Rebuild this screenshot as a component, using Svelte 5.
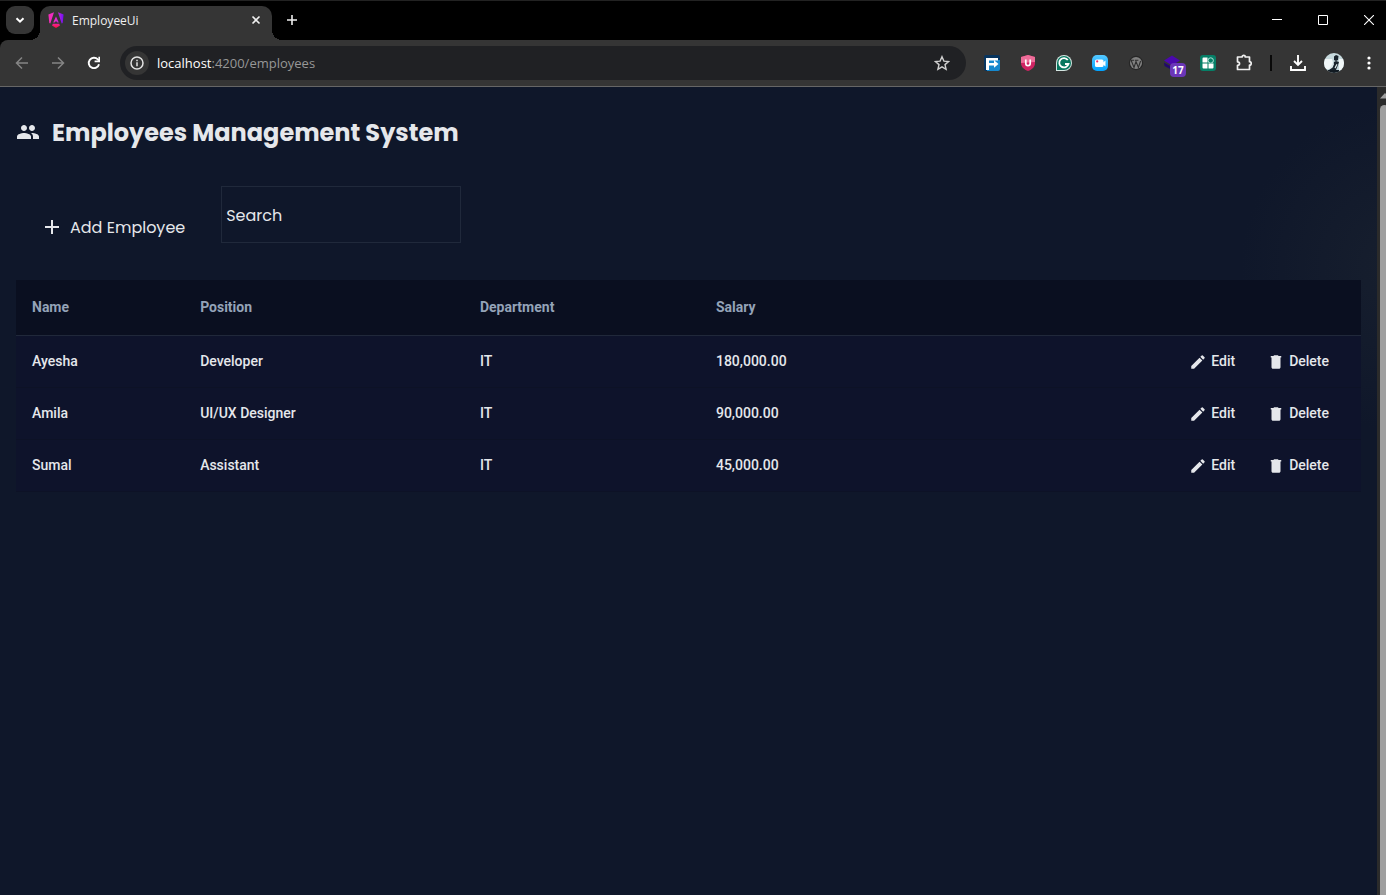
<script>
  const employees = [
    { name: 'Ayesha', position: 'Developer', department: 'IT', salary: '180,000.00' },
    { name: 'Amila', position: 'UI/UX Designer', department: 'IT', salary: '90,000.00' },
    { name: 'Sumal', position: 'Assistant', department: 'IT', salary: '45,000.00' },
  ];
  let search = $state('');
</script>

<div class="window">
  <header class="tabstrip">
    <button class="tab-search" aria-label="Search tabs">
      <svg width="10" height="10" viewBox="0 0 10 10"><path d="M1.5 3.2 5 6.7 8.5 3.2" fill="none" stroke="#fff" stroke-width="2" /></svg>
    </button>
    <div class="tab">
      <svg width="16" height="16" viewBox="0 0 16 16" aria-hidden="true">
        <defs>
          <linearGradient id="ng" x1="0" y1="0" x2="1" y2="0">
            <stop offset="0" stop-color="#f62cb4" />
            <stop offset="0.5" stop-color="#e62ad0" />
            <stop offset="1" stop-color="#6b10f5" />
          </linearGradient>
          <linearGradient id="ngb" x1="0" y1="0" x2="0" y2="1">
            <stop offset="0" stop-color="#f0219f" />
            <stop offset="1" stop-color="#ff1238" />
          </linearGradient>
        </defs>
        <path fill="url(#ng)" d="M6 .2.4 2.6l.9 8.3 1 .6L6 .2Zm4 0 5.600 2.400-.9 8.300-1 .6L10 .2ZM8 4.600l-2.800 6h1.500l.5-1.200h1.600l.5 1.200h1.500Z" />
        <path fill="url(#ngb)" d="M4.900 11.800h6.200l.9 1.700L8 15.900 4 13.500Z" />
      </svg>
      <span class="tab-title">EmployeeUi</span>
      <button class="tab-close" aria-label="Close tab">
        <svg width="10" height="10" viewBox="0 0 10 10"><path d="m1.500 1.500 7 7m0-7-7 7" stroke="#f0f0f0" stroke-width="1.600" /></svg>
      </button>
    </div>
    <button class="new-tab" aria-label="New tab">
      <svg width="12" height="12" viewBox="0 0 12 12"><path d="M6 1v10M1 6h10" stroke="#eee" stroke-width="1.600" /></svg>
    </button>
    <div class="controls">
      <button aria-label="Minimize"><svg width="10" height="10" viewBox="0 0 10 10"><path d="M0 4.500h10" stroke="#fff" /></svg></button>
      <button aria-label="Maximize"><svg width="10" height="10" viewBox="0 0 10 10"><path d="M.5.5h9v9h-9z" fill="none" stroke="#fff" /></svg></button>
      <button aria-label="Close"><svg width="10" height="10" viewBox="0 0 10 10"><path d="m0 0 10 10M10 0 0 10" stroke="#fff" stroke-width="1.100" /></svg></button>
    </div>
  </header>

  <nav class="toolbar" aria-label="Browser toolbar">
    <button class="slot" aria-label="Back">
      <svg width="14" height="14" viewBox="0 0 14 14"><path d="M13 7H2M7 1.500 1.500 7 7 12.500" fill="none" stroke="#858585" stroke-width="1.500" /></svg>
    </button>
    <button class="slot" aria-label="Forward">
      <svg width="14" height="14" viewBox="0 0 14 14"><path d="M1 7h11M7 1.500 12.500 7 7 12.500" fill="none" stroke="#858585" stroke-width="1.500" /></svg>
    </button>
    <button class="slot" aria-label="Reload">
      <svg width="14" height="14" viewBox="0 0 14 14"><path d="M12 8.200A5.200 5.200 0 1 1 10.800 3.400L12 4.600" fill="none" stroke="#fff" stroke-width="1.900" /><path d="M13 .8v5.400H7.600V4.600h3.800V.8z" fill="#fff" /></svg>
    </button>
    <div class="omnibox">
      <button class="info" aria-label="Site information">
        <svg width="14" height="14" viewBox="0 0 14 14"><circle cx="7" cy="7" r="6" fill="none" stroke="#e3e3e3" stroke-width="1.500" /><path d="M7 6.200v4M7 3.700v1.500" stroke="#e3e3e3" stroke-width="1.500" /></svg>
      </button>
      <span class="url"><b>localhost</b>:4200/employees</span>
      <button class="slot" aria-label="Bookmark this tab">
        <svg width="16" height="16" viewBox="0 0 16 16"><path d="m8 1.700 1.900 4.400 4.700.4-3.600 3.100 1.100 4.700L8 11.800l-4.100 2.500L5 9.600 1.400 6.500l4.700-.4Z" fill="none" stroke="#d0d0d0" stroke-width="1.400" /></svg>
      </button>
    </div>

    <button class="slot" aria-label="Formatter extension">
      <svg width="16" height="16" viewBox="0 0 16 16"><rect width="16" height="16" rx="2" fill="#08355f" /><path d="M3 5h13v9a2 2 0 0 1-2 2H3z" fill="#1688ce" /><path d="M2 3h12v2.500H5V8h5V5.300L14.500 9 10 12.700v-2.200H5V15H2z" fill="#fff" /></svg>
    </button>
    <button class="slot" aria-label="Shield extension">
      <svg width="16" height="16" viewBox="0 0 16 16"><path d="m8 0 7 2v6c0 4-3 6.500-7 8-4-1.500-7-4-7-8V2z" fill="#cf2463" /><path d="m8 0 7 2v5L1 8V2z" fill="#ed6d99" /><path d="M5.800 4.500v4a2.200 2.200 0 0 0 4.400 0v-4" fill="none" stroke="#fff" stroke-width="1.700" /></svg>
    </button>
    <button class="slot" aria-label="Grammar extension">
      <svg width="16" height="16" viewBox="0 0 16 16"><path d="M8 0a8 8 0 1 1 0 16H0V8a8 8 0 0 1 8-8Z" fill="#d5e6e2" /><path d="M8 1a7 7 0 1 1 0 14H1V8a7 7 0 0 1 7-7Z" fill="#08775f" /><path d="M11.800 5A4.700 4.700 0 1 0 12.500 9H9" fill="none" stroke="#fff" stroke-width="1.800" /></svg>
    </button>
    <button class="slot" aria-label="Recorder extension">
      <svg width="16" height="16" viewBox="0 0 16 16"><defs><linearGradient id="rec" x1="0" y1="0" x2="0" y2="1"><stop offset="0" stop-color="#55c8ff" /><stop offset="1" stop-color="#00a2ff" /></linearGradient></defs><rect width="16" height="16" rx="5" fill="url(#rec)" /><rect x="3" y="4.500" width="8.500" height="7.500" rx="1.500" fill="#fff" /><path d="m11 7.500 2.500-2v6L11 9.500z" fill="#fff" /><circle cx="5.200" cy="6.400" r="1.100" fill="#f0306a" /></svg>
    </button>
    <button class="slot" aria-label="WordPress extension">
      <svg width="16" height="16" viewBox="0 0 16 16"><circle cx="8" cy="8" r="7.200" fill="#262626" /><circle cx="8" cy="8" r="6" fill="#808080" /><path d="M3.200 5.500 6 12.500l2-6 2.400 6 2.200-6.500M2.800 5.300h3.400M7 5.300h3.400" fill="none" stroke="#2d2d2d" stroke-width="1.100" /></svg>
    </button>
    <button class="slot counter" aria-label="Learning extension, 17 new">
      <svg width="18" height="16" viewBox="0 0 18 16"><path d="m1 5.500 8-5 8 5-8 5z" fill="#4b08ad" /><path d="m1 7.500 8 4.500v3L1.500 11z" fill="#21086e" /></svg>
      <span class="count">17</span>
    </button>
    <button class="slot" aria-label="Blocks extension">
      <svg width="16" height="16" viewBox="0 0 16 16"><rect width="16" height="16" rx="3" fill="#067f67" /><path d="M3.500 2.500h4v5h-5v-4a1 1 0 0 1 1-1ZM2.500 8.500h5v5h-4a1 1 0 0 1-1-1zM8.500 8.500h5v4a1 1 0 0 1-1 1h-4z" fill="#fff" /><circle cx="10.700" cy="5.500" r="2.700" fill="#067f67" stroke="#b7e2d9" /></svg>
    </button>
    <button class="slot" aria-label="Extensions">
      <svg width="18" height="18" viewBox="0 0 18 18"><path d="M2.500 3h4.600a1.600 1.600 0 0 1 3.200 0h4.200v4.700a1.700 1.700 0 0 1 0 3.400v4.400h-12v-4.200c2.700 0 2.700-3.500 0-3.500z" fill="none" stroke="#f0f0f0" stroke-width="1.700" stroke-linejoin="round" /></svg>
    </button>
    <span class="divider"></span>
    <button class="slot" aria-label="Downloads">
      <svg width="16" height="16" viewBox="0 0 16 16"><path d="M8 0v9.500M4 6l4 4 4-4M1 11v4h14v-4" fill="none" stroke="#fff" stroke-width="1.900" /></svg>
    </button>
    <button class="slot" aria-label="Profile">
      <svg width="20" height="20" viewBox="0 0 20 20"><defs><clipPath id="face"><circle cx="10" cy="10" r="10" /></clipPath></defs><g clip-path="url(#face)"><path fill="#c6d9dd" d="M0 0h20v20H0z" /><path fill="#f1f7f8" d="M0 6h8l1 4-3 6H0zM15 6h5v11h-5z" /><path fill="#18222b" d="M10 3.500 12 2l2.500 1-.5 4-2 1-2-1zM12 8l3 1-1 3-2 5-5 2-2-2 4-3 1-5z" /><path fill="#dbe7e9" d="m9 10 1 1-2 4-3 1zM12.500 11l1 .5-2 4-1-1z" /><path fill="#111a22" d="M4 17h11v3H4z" /></g></svg>
    </button>
    <button class="slot last" aria-label="Browser menu">
      <svg width="4" height="14" viewBox="0 0 4 14"><g fill="#fff"><circle cx="2" cy="2" r="1.600" /><circle cx="2" cy="7" r="1.600" /><circle cx="2" cy="12" r="1.600" /></g></svg>
    </button>
  </nav>

  <div class="viewport">
    <main>
      <h1>
        <svg width="24" height="24" viewBox="0 0 24 24" fill="currentColor" aria-hidden="true"><path d="M16 11c1.660 0 2.990-1.340 2.990-3S17.660 5 16 5c-1.660 0-3 1.340-3 3s1.340 3 3 3zm-8 0c1.660 0 2.990-1.340 2.990-3S9.660 5 8 5C6.340 5 5 6.340 5 8s1.340 3 3 3zm0 2c-2.330 0-7 1.170-7 3.500V19h14v-2.500c0-2.330-4.670-3.500-7-3.500zm8 0c-.29 0-.62.02-.97.05 1.160.84 1.970 1.970 1.970 3.450V19h6v-2.500c0-2.330-4.670-3.500-7-3.500z" /></svg>
        Employees Management System
      </h1>

      <div class="actions">
        <button class="add">
          <svg width="24" height="24" viewBox="0 0 24 24" fill="currentColor" aria-hidden="true"><path d="M19 13h-6v6h-2v-6H5v-2h6V5h2v6h6z" /></svg>
          Add Employee
        </button>
        <input type="text" placeholder="Search" aria-label="Search" bind:value={search} />
      </div>

      <table>
        <colgroup><col class="c-name" /><col class="c-position" /><col class="c-department" /><col class="c-salary" /><col /></colgroup>
        <thead>
          <tr><th>Name</th><th>Position</th><th>Department</th><th>Salary</th><th></th></tr>
        </thead>
        <tbody>
          {#each employees as e}
            <tr>
              <td>{e.name}</td>
              <td>{e.position}</td>
              <td>{e.department}</td>
              <td>{e.salary}</td>
              <td>
                <div class="row-actions">
                  <button>
                    <svg width="18" height="18" viewBox="0 0 24 24" fill="currentColor" aria-hidden="true"><path d="M3 17.250V21h3.750L17.810 9.940l-3.750-3.750L3 17.250zM20.710 7.040a1 1 0 0 0 0-1.410l-2.340-2.340a1 1 0 0 0-1.410 0l-1.830 1.830 3.750 3.750 1.830-1.830z" /></svg>
                    Edit
                  </button>
                  <button>
                    <svg width="18" height="18" viewBox="0 0 24 24" fill="currentColor" aria-hidden="true"><path d="M6 19c0 1.100.9 2 2 2h8c1.100 0 2-.9 2-2V6H6v13zM19 4h-3.500l-1-1h-5l-1 1H5v2h14V4z" /></svg>
                    Delete
                  </button>
                </div>
              </td>
            </tr>
          {/each}
        </tbody>
      </table>
    </main>
    <div class="scrollbar" aria-hidden="true">
      <svg width="12" height="6" viewBox="0 0 12 6"><path d="M0 5.500 5 0l5 5.500z" fill="#9f9f9f" /></svg>
      <div class="thumb"></div>
    </div>
  </div>
</div>

<style>
  :global(body) {
    margin: 0;
    background: #0f172a;
  }
  .window {
    display: flex;
    flex-direction: column;
    min-height: 100vh;
    background: #000;
    font-family: "Open Sans", "Noto Sans", sans-serif;
    color: #e5e7eb;
  }
  button {
    display: flex;
    align-items: center;
    justify-content: center;
    margin: 0;
    padding: 0;
    border: 0;
    background: none;
    color: inherit;
    font: inherit;
  }
  svg {
    display: block;
    flex: none;
  }

  .tabstrip {
    display: flex;
    align-items: flex-end;
    height: 40px;
    box-shadow: inset 0 1px #222;
  }
  .tab-search {
    width: 28px;
    height: 28px;
    margin: 0 6px;
    border-radius: 9px;
    background: #353535;
    align-self: center;
  }
  .tab {
    position: relative;
    display: flex;
    align-items: center;
    gap: 8px;
    width: 232px;
    height: 34px;
    box-sizing: border-box;
    padding: 0 8px 6px;
    border-radius: 10px 10px 0 0;
    background: #353535;
  }
  .tab::before,
  .tab::after {
    content: "";
    position: absolute;
    bottom: 0;
    width: 10px;
    height: 10px;
  }
  .tab::before {
    right: 100%;
    background: radial-gradient(circle at 0 0, transparent 10px, #353535 10px);
  }
  .tab::after {
    left: 100%;
    background: radial-gradient(circle at 100% 0, transparent 10px, #353535 10px);
  }
  .tab-title {
    flex: 1;
    font-size: 12px;
    color: #f0f0f0;
  }
  .tab-close {
    width: 16px;
    height: 16px;
  }
  .new-tab {
    width: 28px;
    height: 28px;
    margin-left: 6px;
    align-self: center;
  }
  .controls {
    display: flex;
    align-self: stretch;
    margin-left: auto;
    margin-right: -6px;
  }
  .controls button {
    width: 46px;
  }

  .toolbar {
    display: flex;
    align-items: center;
    height: 47px;
    box-sizing: border-box;
    padding-left: 4px;
    border-bottom: 1px solid #666;
    border-top-left-radius: 8px;
    background: #353535;
  }
  .slot {
    flex: none;
    width: 36px;
    height: 34px;
  }
  .last {
    width: 34px;
  }
  .omnibox {
    flex: 1;
    display: flex;
    align-items: center;
    height: 34px;
    margin: 0 8px;
    padding: 0 6px 0 5px;
    border-radius: 17px;
    background: #202124;
  }
  .info {
    width: 24px;
    height: 24px;
    border-radius: 50%;
    background: #353535;
  }
  .url {
    flex: 1;
    margin-left: 8px;
    font-size: 13px;
    color: #979797;
  }
  .url b {
    font-weight: 400;
    color: #fff;
  }
  .counter {
    position: relative;
  }
  .count {
    position: absolute;
    left: 16px;
    top: 17px;
    width: 16px;
    height: 14px;
    border-radius: 4px;
    background: #6b36b8;
    color: #fff;
    font: 700 10px/14px "Open Sans", sans-serif;
    text-align: center;
  }
  .divider {
    width: 2px;
    height: 16px;
    margin: 0 8px;
    background: #090909;
  }

  .viewport {
    flex: 1;
    display: flex;
    background: #0f172a;
  }
  main {
    flex: 1;
    padding: 25px 16px;
    background: radial-gradient(circle at 102% 180px, #171f2e, #0f172a 164px);
    font-family: Roboto, sans-serif;
  }
  h1,
  .actions {
    font-family: Poppins, Inter, sans-serif;
  }
  h1 {
    display: flex;
    align-items: center;
    gap: 12px;
    height: 40px;
    margin: 0 0 34px;
    font-size: 24px;
    font-weight: 700;
  }
  .actions {
    display: flex;
    align-items: flex-end;
    gap: 36px;
    margin: 0 0 37px 24px;
    font-size: 16px;
  }
  .add {
    gap: 6px;
    height: 32px;
  }
  input {
    width: 240px;
    height: 57px;
    box-sizing: border-box;
    padding: 2px 4px 0;
    border: 1px solid #20293b;
    border-radius: 0;
    background: transparent;
    color: inherit;
    font: inherit;
    outline: none;
  }
  input::placeholder {
    color: #e5e7eb;
    opacity: 1;
  }
  table {
    width: 100%;
    table-layout: fixed;
    border-collapse: separate;
    border-spacing: 0;
    background: #0e132b;
    font-size: 14px;
    font-weight: 500;
  }
  .c-name { width: 12.500%; }
  .c-position { width: 20.800%; }
  .c-department { width: 17.550%; }
  .c-salary { width: 20%; }
  th,
  td {
    box-sizing: border-box;
    padding: 0 16px 2px;
    text-align: left;
  }
  th {
    height: 56px;
    border-bottom: 1px solid #20283a;
    background: #0a0f20;
    color: #94a3b8;
    font-weight: 700;
  }
  td {
    height: 52px;
    border-bottom: 1px solid #0d1226;
  }
  .row-actions {
    display: flex;
    justify-content: flex-end;
    gap: 32px;
    padding-right: 16px;
  }
  .row-actions button {
    gap: 4px;
  }
  .row-actions svg {
    margin-top: 2px;
  }

  .scrollbar {
    flex: none;
    display: flex;
    flex-direction: column;
    width: 6px;
    padding: 6px 0 0 3px;
    overflow: hidden;
    background: #2b2b2b;
  }
  .thumb {
    flex: 1;
    width: 9px;
    margin-top: 6px;
    border-radius: 5px 5px 0 0;
    background: #9f9f9f;
  }
</style>
